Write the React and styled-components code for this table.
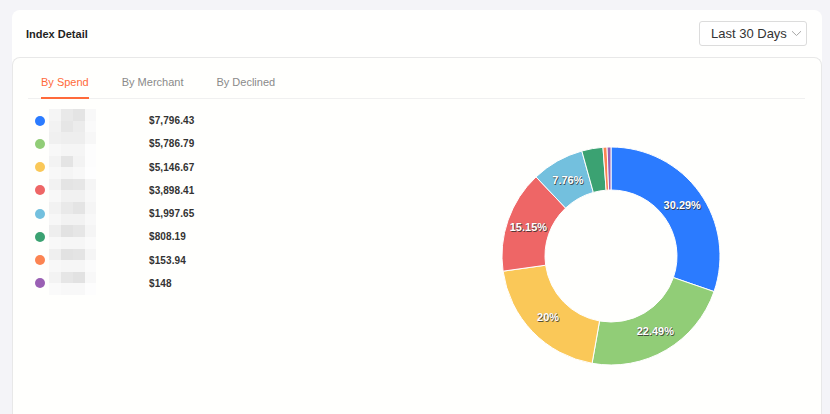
import React from "react";
import styled, { createGlobalStyle } from "styled-components";

const GlobalStyle = createGlobalStyle`
  html, body { margin: 0; padding: 0; background: #f4f4f8; overflow: hidden; }
  body { font-family: "Liberation Sans", Arial, sans-serif; }
`;

const Page = styled.div`
  padding: 10px 8px 0 12px;
  height: 414px;
  box-sizing: border-box;
  display: flex;
  flex-direction: column;
`;

const Card = styled.section`
  background: #fffffe;
  border-radius: 8px 8px 0 0;
  flex: 1;
  display: flex;
  flex-direction: column;
`;

const Header = styled.header`
  height: 47px;
  box-sizing: border-box;
  padding: 0 15px 0 14px;
  display: flex;
  align-items: center;
  justify-content: space-between;
`;

const Title = styled.h2`
  margin: 0;
  font-size: 11px;
  font-weight: 700;
  color: #1f1f1f;
`;

const Select = styled.button`
  height: 25px;
  width: 108px;
  box-sizing: border-box;
  border: 1px solid #dcdcdc;
  border-radius: 3px;
  background: #fff;
  padding: 0 0 0 11px;
  display: flex;
  align-items: center;
  gap: 4px;
  font-family: "Liberation Sans", Arial, sans-serif;
  font-size: 13px;
  color: #333;
`;

const Inner = styled.div`
  flex: 1;
  border: 1px solid #e8e8e8;
  border-bottom: none;
  border-radius: 8px 8px 0 0;
  background: #fffffd;
  padding: 0 16px 0 15px;
`;

const TabBar = styled.nav`
  display: flex;
  gap: 33px;
  padding-left: 13px;
  border-bottom: 1px solid #f0f0f0;
`;

const Tab = styled.div`
  font-size: 11px;
  line-height: 14px;
  padding: 17px 0 8px;
  margin-bottom: -1px;
  border-bottom: 2px solid ${p => (p.$active ? "#ff6a3a" : "transparent")};
  color: ${p => (p.$active ? "#ff6a3a" : "#8a8a8a")};
`;

const Content = styled.div`
  display: flex;
  padding-top: 10px;
`;

const Legend = styled.ul`
  list-style: none;
  margin: 0;
  padding: 0 0 0 7px;
  width: 220px;
`;

const Row = styled.li`
  height: 23.25px;
  display: flex;
  align-items: center;
`;

const Dot = styled.span`
  width: 10px;
  height: 10px;
  border-radius: 50%;
  background: ${p => p.$color};
  margin-right: 4px;
  flex: none;
`;

const Mask = styled.span`
  width: 47px;
  height: 100%;
  display: grid;
  grid-template-columns: 12px 12px 12px 11px;
  grid-template-rows: 1fr 1fr;
  flex: none;
`;

const Cell = styled.span`
  background: ${p => p.$c};
`;

const Value = styled.span`
  margin-left: 53px;
  font-size: 10px;
  font-weight: 700;
  color: #333;
  letter-spacing: 0.1px;
`;

const ChartArea = styled.div`
  flex: 1;
  padding: 27px 0 0 236px;
`;

const data = [
  { v: 7796.43, label: "$7,796.43", color: "#2b7bff" },
  { v: 5786.79, label: "$5,786.79", color: "#91cd77" },
  { v: 5146.67, label: "$5,146.67", color: "#fac858" },
  { v: 3898.41, label: "$3,898.41", color: "#ee6666" },
  { v: 1997.65, label: "$1,997.65", color: "#73c0de" },
  { v: 808.19, label: "$808.19", color: "#3ba272" },
  { v: 153.94, label: "$153.94", color: "#fc8452" },
  { v: 148, label: "$148", color: "#9a60b4" },
];

const mosaic = [
  ["#f5f5f5", "#e9e9e9", "#e4e4e4", "#f8f8f8", "#f2f2f2", "#e6e6e6", "#ececec", "#fafafa"],
  ["#f0f0f0", "#eeeeee", "#eeeeee", "#f7f7f7", "#f8f8f8", "#f5f5f5", "#f5f5f5", "#fdfdfd"],
  ["#f3f3f3", "#e4e4e4", "#f3f3f3", "#fdfdfd", "#f8f8f8", "#f5f5f5", "#f8f8f8", "#fefefe"],
  ["#f2f2f2", "#e4e4e4", "#e6e6e6", "#f5f5f5", "#f8f8f8", "#f1f1f1", "#f1f1f1", "#f8f8f8"],
  ["#f2f2f2", "#e9e9e9", "#e4e4e4", "#f5f5f5", "#f7f7f7", "#f2f2f2", "#f2f2f2", "#f8f8f8"],
  ["#eeeeee", "#e2e2e2", "#e6e6e6", "#f5f5f5", "#f8f8f8", "#f6f6f6", "#f6f6f6", "#fafafa"],
  ["#efefef", "#e2e2e2", "#e4e4e4", "#f5f5f5", "#f8f8f8", "#f6f6f6", "#f6f6f6", "#fbfbfb"],
  ["#f3f3f3", "#e6e6e6", "#e2e2e2", "#f8f8f8", "#fafafa", "#f8f8f8", "#f8f8f8", "#fdfdfd"],
];

function Donut() {
  const cx = 120, cy = 120, r1 = 109, r0 = 66;
  const total = data.reduce((s, d) => s + d.v, 0);
  const pt = (r, a) => [cx + r * Math.sin(a), cy - r * Math.cos(a)];
  let acc = 0;
  const slices = data.map(d => {
    const a0 = (acc / total) * Math.PI * 2;
    acc += d.v;
    const a1 = (acc / total) * Math.PI * 2;
    const large = a1 - a0 > Math.PI ? 1 : 0;
    const [x0, y0] = pt(r1, a0);
    const [x1, y1] = pt(r1, a1);
    const [x2, y2] = pt(r0, a1);
    const [x3, y3] = pt(r0, a0);
    const path = `M${x0} ${y0} A${r1} ${r1} 0 ${large} 1 ${x1} ${y1} L${x2} ${y2} A${r0} ${r0} 0 ${large} 0 ${x3} ${y3} Z`;
    const pct = (d.v / total) * 100;
    const txt = Math.round(pct * 100) / 100 + "%";
    const [lx, ly] = pt((r0 + r1) / 2, (a0 + a1) / 2);
    return { path, color: d.color, pct, txt, lx, ly };
  });
  return (
    <svg width="240" height="240" viewBox="0 0 240 240">
      {slices.map((s, i) => (
        <path key={i} d={s.path} fill={s.color} stroke="#fff" strokeWidth="1" strokeLinejoin="round" />
      ))}
      {slices.filter(s => s.pct > 5).map((s, i) => (
        <g key={i} fontFamily="Liberation Sans, Arial, sans-serif" fontSize="11" fontWeight="700" textAnchor="middle">
          <text x={s.lx + 0.8} y={s.ly + 4.8} fill="rgba(40,40,40,0.75)">{s.txt}</text>
          <text x={s.lx} y={s.ly + 4} fill="#fff" stroke="rgba(60,60,60,0.35)" strokeWidth="0.6" paintOrder="stroke">{s.txt}</text>
        </g>
      ))}
    </svg>
  );
}

export default function App() {
  return (
    <>
      <GlobalStyle />
      <Page>
        <Card>
          <Header>
            <Title>Index Detail</Title>
            <Select>
              Last 30 Days
              <svg width="11" height="7" viewBox="0 0 11 7">
                <path d="M1 1.2 L5.5 5.5 L10 1.2" fill="none" stroke="#a8a8a8" strokeWidth="1" />
              </svg>
            </Select>
          </Header>
          <Inner>
            <TabBar>
              <Tab $active>By Spend</Tab>
              <Tab>By Merchant</Tab>
              <Tab>By Declined</Tab>
            </TabBar>
            <Content>
              <Legend>
                {data.map((d, i) => (
                  <Row key={i}>
                    <Dot $color={d.color} />
                    <Mask>
                      {mosaic[i].map((c, j) => <Cell key={j} $c={c} />)}
                    </Mask>
                    <Value>{d.label}</Value>
                  </Row>
                ))}
              </Legend>
              <ChartArea>
                <Donut />
              </ChartArea>
            </Content>
          </Inner>
        </Card>
      </Page>
    </>
  );
}
